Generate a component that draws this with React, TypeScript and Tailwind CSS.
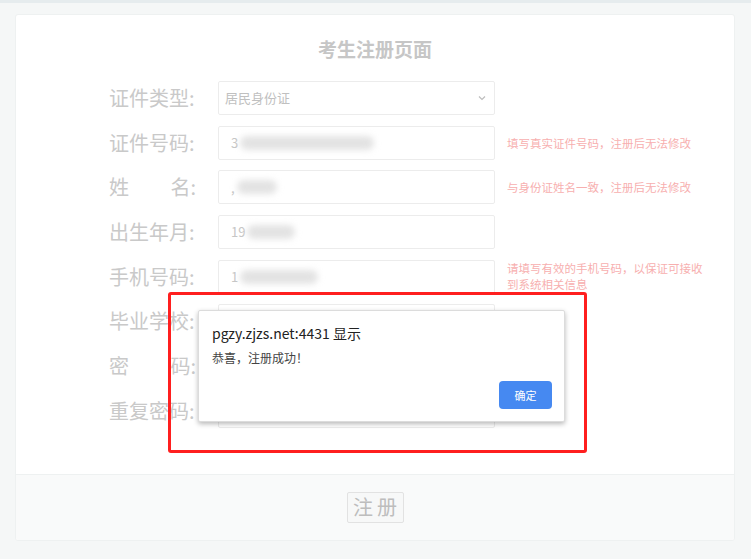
import React from "react";

const font = { fontFamily: '"Noto Sans CJK SC", "Liberation Sans", sans-serif' };

function Label({ text }: { text: string }) {
  if (text.length === 2) {
    return (
      <div className="w-[90px] flex justify-between text-[20px] text-[#c9c9c9] pr-[3px]">
        <span>{text[0]}</span>
        <span>{text[1]}:</span>
      </div>
    );
  }
  return <div className="w-[90px] text-[20px] text-[#c9c9c9] whitespace-nowrap">{text}:</div>;
}

function Blur({ w, ml = 0 }: { w: number; ml?: number }) {
  return (
    <div
      className="h-[14px] bg-[#e3e3e3] rounded-full blur-[3px]"
      style={{ width: w, marginLeft: ml }}
    />
  );
}

function Input({ prefix, blur }: { prefix?: string; blur?: number }) {
  return (
    <div className="w-[277px] h-[34px] border border-[#ececec] rounded-[2px] bg-white flex items-center pl-[12px] text-[13px] text-[#c6c6c6]">
      {prefix && <span>{prefix}</span>}
      {blur ? <Blur w={blur} ml={2} /> : null}
    </div>
  );
}

export default function App() {
  const hint = "text-[11.5px] text-[#f7afaf] leading-[16px]";
  return (
    <div style={font} className="relative min-h-[559px] bg-[#f5f7f7] border-t-[3px] border-[#e6ecee] pt-[11px] pl-[15px] pr-[16px] pb-[18px]">
      <div className="bg-white rounded-[3px] border border-[#eef1f1] overflow-hidden">
        <div className="pt-[20px] pb-[46px]">
          <div className="text-center text-[19px] font-bold text-[#c6c6c6] leading-[28px] mb-[18px]">考生注册页面</div>
          <div className="flex flex-col gap-[10.7px] pl-[93px]">
            <div className="flex items-center h-[34px]">
              <Label text="证件类型" />
              <div className="ml-[19px] w-[277px] h-[34px] border border-[#ececec] rounded-[2px] flex items-center justify-between pl-[6px] pr-[8px] text-[13px] text-[#c0c0c0]">
                <span>居民身份证</span>
                <svg width="8" height="6" viewBox="0 0 8 6" fill="none" stroke="#bdbdbd" strokeWidth="1.2">
                  <path d="M1 1.5 L4 4.5 L7 1.5" />
                </svg>
              </div>
            </div>
            <div className="flex items-center h-[34px]">
              <Label text="证件号码" />
              <div className="ml-[19px]"><Input prefix="3" blur={134} /></div>
              <div className={`ml-[12px] ${hint}`}>填写真实证件号码，注册后无法修改</div>
            </div>
            <div className="flex items-center h-[34px]">
              <Label text="姓名" />
              <div className="ml-[19px]"><Input prefix="," blur={40} /></div>
              <div className={`ml-[12px] ${hint}`}>与身份证姓名一致，注册后无法修改</div>
            </div>
            <div className="flex items-center h-[34px]">
              <Label text="出生年月" />
              <div className="ml-[19px]"><Input prefix="19" blur={48} /></div>
            </div>
            <div className="flex items-start h-[34px]">
              <div className="h-[34px] flex items-center"><Label text="手机号码" /></div>
              <div className="ml-[19px]"><Input prefix="1" blur={78} /></div>
              <div className={`ml-[12px] w-[200px] ${hint}`}>请填写有效的手机号码，以保证可接收到系统相关信息</div>
            </div>
            <div className="flex items-center h-[34px]">
              <Label text="毕业学校" />
              <div className="ml-[19px]"><Input /></div>
            </div>
            <div className="flex items-center h-[34px]">
              <Label text="密码" />
              <div className="ml-[19px]"><Input /></div>
            </div>
            <div className="flex items-center h-[34px]">
              <Label text="重复密码" />
              <div className="ml-[19px]"><Input /></div>
            </div>
          </div>
        </div>
        <div className="h-[66px] bg-[#f9fafa] border-t border-[#eef1f1] flex items-center justify-center">
          <div className="w-[57px] h-[31px] border border-[#e2e2e2] rounded-[2px] bg-[#f7f8f8] flex items-center justify-center text-[20px] text-[#bdbdbd] tracking-[4px] pl-[4px]">
            注册
          </div>
        </div>
      </div>

      <div className="absolute left-[168px] top-[289px] w-[419px] h-[161px] border-[3px] border-[#ff1f1f] rounded-[3px]" />

      <div className="absolute left-[198px] top-[307px] w-[367px] h-[112px] bg-white border border-[#dcdcdc] shadow-[0_2px_5px_rgba(0,0,0,0.28)] rounded-[2px]">
        <div className="absolute left-[13px] top-[12px] text-[14px] text-[#222] leading-[20px]">pgzy.zjzs.net:4431 显示</div>
        <div className="absolute left-[13px] top-[39px] text-[12px] text-[#444] leading-[16px]">恭喜，注册成功！</div>
        <div className="absolute left-[300px] top-[70px] w-[53px] h-[28px] rounded-[4px] bg-[#4689f1] flex items-center justify-center text-[11px] text-white">确定</div>
      </div>
    </div>
  );
}
